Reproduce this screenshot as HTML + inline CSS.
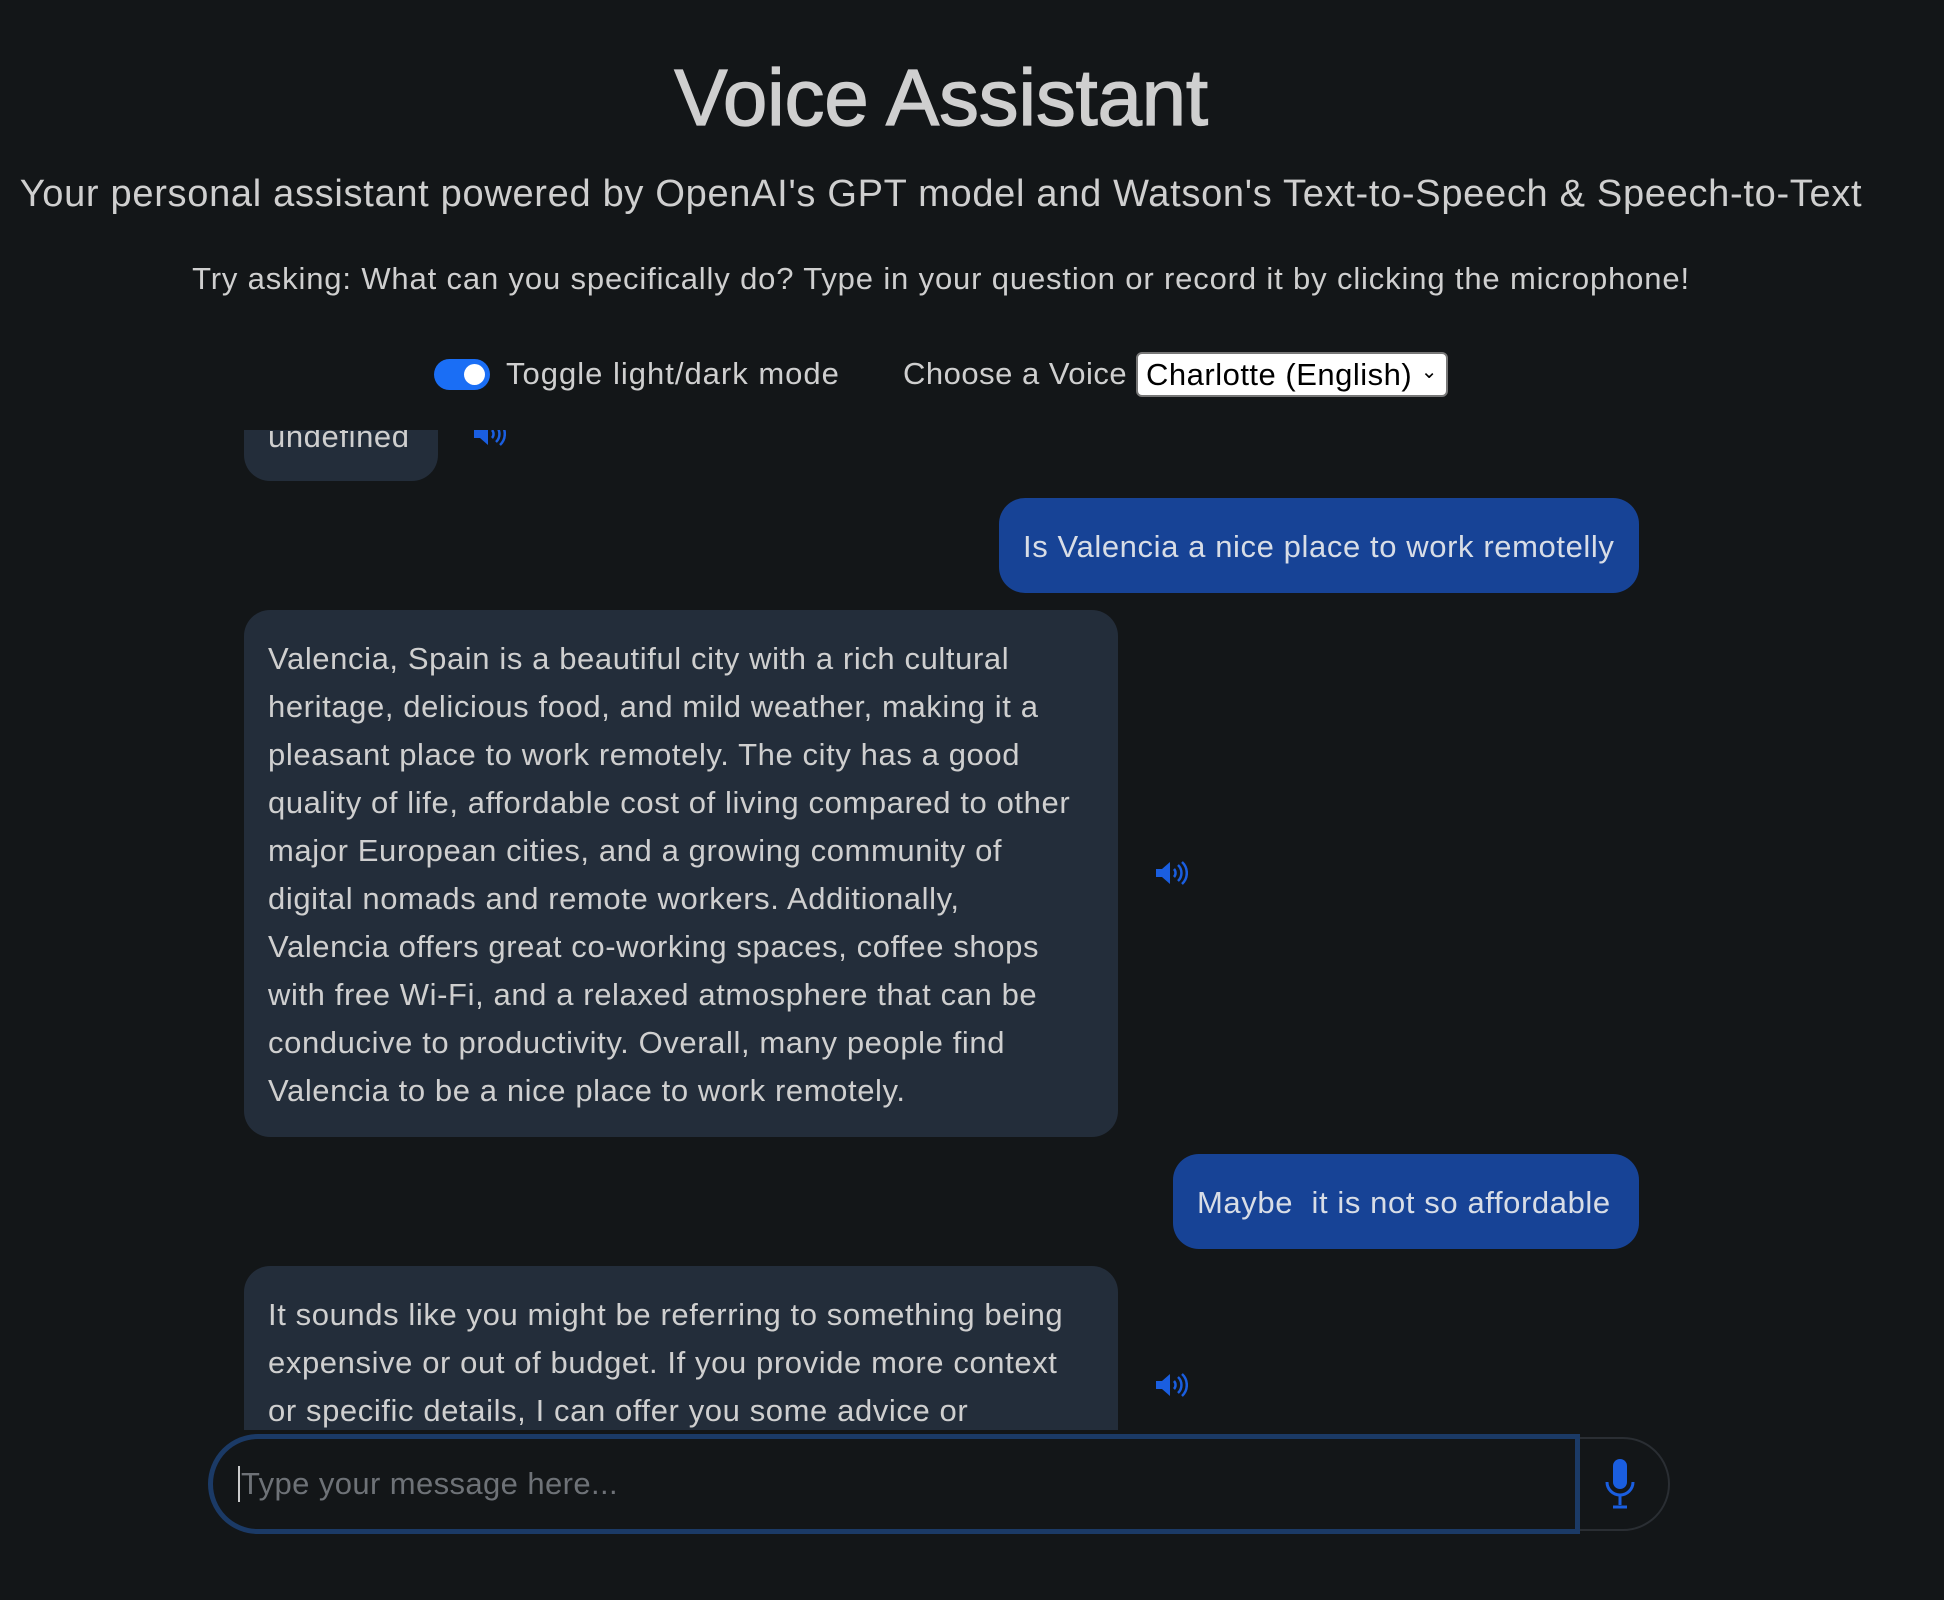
<!DOCTYPE html>
<html><head><meta charset="utf-8"><style>
body{margin:0;width:1944px;height:1600px;background:#131618;color:#cfcfcf;font-family:"Liberation Sans",sans-serif;overflow:hidden;position:relative}
.c{position:absolute;left:0;width:1882px;text-align:center;white-space:nowrap}
.chat{position:absolute;left:244px;top:430px;width:1400px;height:1000px;overflow:hidden}
.b{position:absolute;background:#232d3a;border-radius:26px;font-size:31px;letter-spacing:0.6px;line-height:48px;padding:0 24px;white-space:nowrap;box-sizing:border-box}
.u{background:#174396;color:#d8dde6}
.sp{position:absolute;width:34px;height:26px}
</style></head><body>
<div class="c" style="top:52px;font-size:80px;letter-spacing:-0.3px;-webkit-text-stroke:1.2px #cfcfcf">Voice Assistant</div>
<div class="c" style="top:173px;font-size:38px;letter-spacing:0.7px">Your personal assistant powered by OpenAI's GPT model and Watson's Text-to-Speech &amp; Speech-to-Text</div>
<div class="c" style="top:261px;font-size:31px;letter-spacing:0.85px">Try asking: What can you specifically do? Type in your question or record it by clicking the microphone!</div>
<div style="position:absolute;left:434px;top:359px;width:56px;height:31px;border-radius:16px;background:#1a6ef5"><div style="position:absolute;right:5px;top:5px;width:21px;height:21px;border-radius:50%;background:#fff"></div></div>
<div style="position:absolute;left:506px;top:356px;font-size:31px;letter-spacing:1px;white-space:nowrap">Toggle light/dark mode</div>
<div style="position:absolute;left:903px;top:356px;font-size:31px;letter-spacing:0.5px;white-space:nowrap">Choose a Voice</div>
<div style="position:absolute;left:1136px;top:352px;width:312px;height:45px;box-sizing:border-box;background:#fff;border:2px solid #777;border-radius:6px;color:#000;font-size:31px;letter-spacing:0.5px;line-height:41px;padding-left:8px;white-space:nowrap">Charlotte (English)<span style="position:absolute;right:8px;top:-2px;font-size:20px">&#8964;</span></div>
<div class="chat">
 <div class="b" style="left:0;top:-40px;width:194px;height:91px;padding-top:23px">undefined</div>
 <svg class="sp" style="left:228px;top:-9px" viewBox="0 0 34 26"><path d="M2 9h6l8-7v22l-8-7H2z" fill="#1a5ee0"/><path d="M20 9a6 6 0 0 1 0 8M24 5a11 11 0 0 1 0 16M28 2a15 15 0 0 1 0 22" stroke="#1a5ee0" stroke-width="2.5" fill="none"/></svg>
 <div class="b u" style="left:755px;top:68px;width:640px;height:95px;line-height:97px">Is Valencia a nice place to work remotelly</div>
 <div class="b" style="left:0;top:180px;width:874px;height:527px;padding-top:25px">Valencia, Spain is a beautiful city with a rich cultural<br>heritage, delicious food, and mild weather, making it a<br>pleasant place to work remotely. The city has a good<br>quality of life, affordable cost of living compared to other<br>major European cities, and a growing community of<br>digital nomads and remote workers. Additionally,<br>Valencia offers great co-working spaces, coffee shops<br>with free Wi-Fi, and a relaxed atmosphere that can be<br>conducive to productivity. Overall, many people find<br>Valencia to be a nice place to work remotely.</div>
 <svg class="sp" style="left:910px;top:430px" viewBox="0 0 34 26"><path d="M2 9h6l8-7v22l-8-7H2z" fill="#1a5ee0"/><path d="M20 9a6 6 0 0 1 0 8M24 5a11 11 0 0 1 0 16M28 2a15 15 0 0 1 0 22" stroke="#1a5ee0" stroke-width="2.5" fill="none"/></svg>
 <div class="b u" style="left:929px;top:724px;width:466px;height:95px;line-height:97px">Maybe&nbsp; it is not so affordable</div>
 <div class="b" style="left:0;top:836px;width:874px;height:300px;padding-top:25px">It sounds like you might be referring to something being<br>expensive or out of budget. If you provide more context<br>or specific details, I can offer you some advice or</div>
 <svg class="sp" style="left:910px;top:942px" viewBox="0 0 34 26"><path d="M2 9h6l8-7v22l-8-7H2z" fill="#1a5ee0"/><path d="M20 9a6 6 0 0 1 0 8M24 5a11 11 0 0 1 0 16M28 2a15 15 0 0 1 0 22" stroke="#1a5ee0" stroke-width="2.5" fill="none"/></svg>
</div>
<div style="position:absolute;left:211px;top:1437px;width:1459px;height:94px;box-sizing:border-box;border:2px solid #2a2e33;border-radius:47px"></div>
<div style="position:absolute;left:208px;top:1434px;width:1372px;height:100px;box-sizing:border-box;border:5px solid #1b3a66;border-radius:50px 0 0 50px;background:#131618"></div>
<div style="position:absolute;left:238px;top:1466px;font-size:31px;letter-spacing:0.4px;color:#6e7277;white-space:nowrap;border-left:2px solid #ccc;padding-left:1px;line-height:36px">Type your message here...</div>
<svg style="position:absolute;left:1604px;top:1458px" width="32" height="52" viewBox="0 0 32 52"><rect x="9" y="1" width="14" height="30" rx="7" fill="#1a5ee0"/><path d="M3 24a13 13 0 0 0 26 0" stroke="#1a5ee0" stroke-width="3" fill="none"/><path d="M16 37v10M9 49h14" stroke="#1a5ee0" stroke-width="3"/></svg>
</body></html>
